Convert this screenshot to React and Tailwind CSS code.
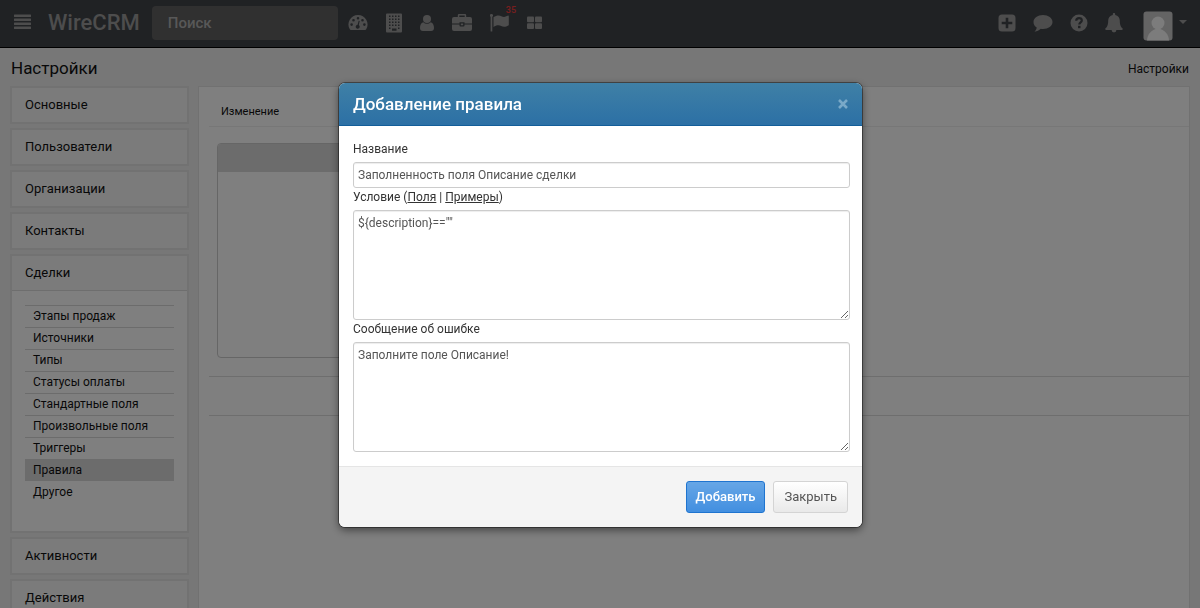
import { useState } from 'react';

const topMenu = [
  { label: 'Дашборд', icon: DashboardIcon },
  { label: 'Организации', icon: BuildingIcon },
  { label: 'Контакты', icon: UserIcon },
  { label: 'Сделки', icon: BriefcaseIcon },
  { label: 'Активности', icon: FlagIcon, badge: 35 },
  { label: 'Ещё', icon: GridIcon },
];

const userMenu = [
  { label: 'Создать', icon: PlusIcon },
  { label: 'Сообщения', icon: CommentIcon },
  { label: 'Помощь', icon: HelpIcon },
  { label: 'Уведомления', icon: BellIcon },
];

const sections = [
  { title: 'Основные' },
  { title: 'Пользователи' },
  { title: 'Организации' },
  { title: 'Контакты' },
  {
    title: 'Сделки',
    items: [
      'Этапы продаж',
      'Источники',
      'Типы',
      'Статусы оплаты',
      'Стандартные поля',
      'Произвольные поля',
      'Триггеры',
      'Правила',
      'Другое',
    ],
  },
  { title: 'Активности' },
  { title: 'Действия' },
];

function DashboardIcon() {
  return (
    <svg width="20" height="18" viewBox="0 0 20 18" fill="currentColor">
      <path
        fillRule="evenodd"
        d="M10 1a9.500 9.500 0 0 0-8.200 14.300c.2.400.600.700 1.100.700h14.200c.5 0 .9-.3 1.100-.7A9.500 9.500 0 0 0 10 1zM10 3a1.300 1.300 0 1 1 0 2.600A1.300 1.300 0 0 1 10 3zM5.500 4.900a1.300 1.300 0 1 1 0 2.600 1.300 1.300 0 0 1 0-2.600zM14.500 4.900a1.300 1.300 0 1 1 0 2.600 1.300 1.300 0 0 1 0-2.600zM3.600 9.300a1.300 1.300 0 1 1 0 2.600 1.300 1.300 0 0 1 0-2.600zM16.400 9.300a1.300 1.300 0 1 1 0 2.600 1.300 1.300 0 0 1 0-2.600zM10.700 6.800l1 .3-.9 4a2 2 0 1 1-1.200-.3z"
      />
    </svg>
  );
}

function BuildingIcon() {
  return (
    <svg width="16" height="20" viewBox="0 0 16 20" fill="currentColor">
      <path
        fillRule="evenodd"
        d="M1 0.500h14q1 0 1 1v17q0 1-1 1H1q-1 0-1-1v-17q0-1 1-1zM3 2.500v1.500h1.500v-1.500zM6 2.500v1.500h1.500v-1.500zM9 2.500v1.500h1.500v-1.500zM12 2.500v1.500h1.500v-1.500zM3 5.500v1.500h1.500v-1.500zM6 5.500v1.500h1.500v-1.500zM9 5.500v1.500h1.500v-1.500zM12 5.500v1.500h1.500v-1.500zM3 8.500v1.500h1.500v-1.500zM6 8.500v1.500h1.500v-1.500zM9 8.500v1.500h1.500v-1.500zM12 8.500v1.500h1.500v-1.500zM3 11.500v1.500h1.500v-1.500zM6 11.500v1.500h1.500v-1.500zM9 11.500v1.500h1.500v-1.500zM12 11.500v1.500h1.500v-1.500zM3 14.500v1.500h1.500v-1.500zM12 14.500v1.500h1.500v-1.500zM6 15.500v2.200h4.500v-2.200z"
      />
    </svg>
  );
}

function UserIcon() {
  return (
    <svg width="14" height="18" viewBox="0 0 14 18" fill="currentColor">
      <circle cx="7" cy="5" r="4" />
      <path d="M3.300 8.200C.8 8.800 0 11.500 0 14c0 1.800 1.100 3 2.800 3h8.400c1.700 0 2.800-1.200 2.800-3 0-2.500-.8-5.200-3.300-5.800A5.300 5.300 0 0 1 7 9.700a5.300 5.300 0 0 1-3.700-1.500z" />
    </svg>
  );
}

function BriefcaseIcon() {
  return (
    <svg width="20" height="18" viewBox="0 0 20 18" fill="currentColor">
      <path
        fillRule="evenodd"
        d="M7 0h6q1.200 0 1.200 1.200V3H18q2 0 2 2v4.500h-7.500V8.300h-5v1.200H0V5q0-2 2-2h3.800V1.200Q5.800 0 7 0zM7.300 1.500V3h5.400V1.500zM0 10.500h7.500v1q0 1 1 1h3q1 0 1-1v-1H20V15q0 2-2 2H2q-2 0-2-2zM8.800 9.500h2.400v1.800H8.800z"
      />
    </svg>
  );
}

function FlagIcon() {
  return (
    <svg width="19" height="18" viewBox="0 0 19 18" fill="currentColor">
      <path d="M1.500 0a1.500 1.500 0 0 1 .8 2.800V17q0 .5-.5.500h-.7q-.5 0-.5-.5V2.800A1.500 1.500 0 0 1 1.500 0zM3.500 3.200C5.300 2.200 6.800 1.500 8.500 1.500c2.300 0 3.600 1.400 5.500 1.400 1.500 0 2.900-.8 4-1.300q.8-.2.800.6v8.500q0 .5-.5.800c-1.300.7-2.700 1.300-4.200 1.300-2.300 0-3.500-1.500-5.800-1.500-1.700 0-3.200.7-4.800 1.600z" />
    </svg>
  );
}

function GridIcon() {
  return (
    <svg width="16" height="14" viewBox="0 0 16 14" fill="currentColor">
      <rect x="0" y="0.500" width="7" height="5.700" rx="1" />
      <rect x="8" y="0.500" width="7" height="5.700" rx="1" />
      <rect x="0" y="7.300" width="7" height="5.700" rx="1" />
      <rect x="8" y="7.300" width="7" height="5.700" rx="1" />
    </svg>
  );
}

function PlusIcon() {
  return (
    <svg width="18" height="18" viewBox="0 0 18 18" fill="currentColor">
      <path
        fillRule="evenodd"
        d="M4 .5h10Q17.500.500 17.500 4v10q0 3.500-3.500 3.500H4Q.5 17.500.500 14V4Q.5.500 4 .5zM7.700 3.700v4h-4v2.600h4v4h2.600v-4h4V7.700h-4v-4z"
      />
    </svg>
  );
}

function CommentIcon() {
  return (
    <svg width="20" height="18" viewBox="0 0 20 18" fill="currentColor">
      <path d="M10 1c5.300 0 9.500 3.100 9.500 7s-4.200 7-9.500 7c-.8 0-1.500-.1-2.200-.2C6.200 16.300 4 17.500 1.500 17.700c1.200-1.200 2-2.500 2.200-4.100C1.700 12.300.500 10.300.500 8 .5 4.100 4.700 1 10 1z" />
    </svg>
  );
}

function HelpIcon() {
  return (
    <svg width="18" height="18" viewBox="0 0 18 18">
      <circle cx="9" cy="9" r="8.500" fill="currentColor" />
      <path d="M6.200 6.800C6.300 5 7.400 4.200 9 4.200s2.800.9 2.800 2.300c0 1.900-2.500 1.900-2.500 4" fill="none" stroke="#404449" strokeWidth="2.200" />
      <rect x="8" y="11.800" width="2.500" height="2.400" fill="#404449" />
    </svg>
  );
}

function BellIcon() {
  return (
    <svg width="18" height="20" viewBox="0 0 18 20" fill="currentColor">
      <path d="M9 0c.7 0 1.200.5 1.200 1.200v.7c3 .5 4.600 2.900 4.600 5.600 0 4.800 1.200 6.700 3 8.200 0 .8-.6 1.300-1.300 1.300h-5.100a2.400 2.400 0 0 1-4.800 0H1.500C.8 17 .2 16.500.2 15.700c1.800-1.500 3-3.400 3-8.200 0-2.700 1.600-5.100 4.600-5.600v-.7C7.800.500 8.300 0 9 0z" />
    </svg>
  );
}

function Header() {
  return (
    <header className="flex h-12 items-center border-b border-black bg-[#404449] pl-3 pr-[13px] text-[#9a9a9a]">
      <button type="button" aria-label="Меню" className="mr-4 flex w-5 justify-center pb-1">
        <svg width="17" height="15" viewBox="0 0 17 15" fill="currentColor">
          <rect y="0.500" width="17" height="2.500" rx="0.500" />
          <rect y="4.500" width="17" height="2.500" rx="0.500" />
          <rect y="8.500" width="17" height="2.500" rx="0.500" />
          <rect y="12.500" width="17" height="2.500" rx="0.500" />
        </svg>
      </button>
      <a href="#" className="mr-3 pb-0.5 text-[22px] font-medium">WireCRM</a>
      <input
        type="search"
        aria-label="Поиск"
        placeholder="Поиск"
        className="mb-0.5 h-[34px] w-[186px] rounded-sm bg-[#606060] px-4 text-[15px] font-medium placeholder:text-[#b0b0b0]"
      />
      <nav className="ml-2.5 flex items-center gap-[18px] pb-0.5">
        {topMenu.map(({ label, icon: Icon, badge }) => (
          <a key={label} href="#" aria-label={label} className="relative">
            <Icon />
            {badge && (
              <span className="absolute -top-2.5 left-4 text-[9px] leading-3 font-medium text-[#f03c3c]">{badge}</span>
            )}
          </a>
        ))}
      </nav>
      <div className="ml-auto flex items-center gap-[17px] pb-0.5">
        {userMenu.map(({ label, icon: Icon }) => (
          <button key={label} type="button" aria-label={label}>
            <Icon />
          </button>
        ))}
      </div>
      <button type="button" aria-label="Профиль" className="ml-5 flex items-center gap-1.5 pt-1">
        <svg width="30" height="30" viewBox="0 0 30 30">
          <rect x="0.500" y="0.500" width="29" height="29" rx="3" fill="#c8c8c8" />
          <circle cx="15" cy="12" r="6.500" fill="#f8f8f8" />
          <path d="M4 29.500c.3-6 4-11 11-12 7 1 10.700 6 11 12z" fill="#f8f8f8" />
        </svg>
        <svg width="8" height="4" viewBox="0 0 8 4" fill="currentColor" className="mb-2">
          <path d="M0 0h8L4 4z" />
        </svg>
      </button>
    </header>
  );
}

function Sidebar() {
  return (
    <aside className="w-[179px] shrink-0 space-y-1">
      {sections.map(({ title, items }) => (
        <section key={title} className="border-2 border-[#e4e4e4] bg-[#f6f6f6]">
          <h2 className="px-[13px] text-[13px] leading-[34px]">
            <a href="#">{title}</a>
          </h2>
          {items && (
            <ul className="border-t border-[#dcdcdc] bg-white px-[13px] pt-3.5 pb-7 text-xs">
              {items.map((item) => (
                <li
                  key={item}
                  className={`border-t px-2 leading-[21px] ${
                    item === 'Правила'
                      ? 'border-[#d8d8d8] bg-[#d8d8d8]'
                      : item === 'Другое'
                        ? 'border-white'
                        : 'border-[#d8d8d8]'
                  }`}
                >
                  <a href="#">{item}</a>
                </li>
              ))}
            </ul>
          )}
        </section>
      ))}
    </aside>
  );
}

function RuleDialog({ onClose }) {
  const [name, setName] = useState('Заполненность поля Описание сделки');
  const [condition, setCondition] = useState('${description}==""');
  const [message, setMessage] = useState('Заполните поле Описание!');

  const field =
    'block w-full rounded-[3px] border border-[#ccc] bg-white px-1 text-xs leading-5 text-[#555] shadow-[inset_0_1px_1px_rgba(0,0,0,0.075)] outline-none';

  return (
    <div className="fixed inset-0 flex items-start justify-center bg-black/50 pt-[83px]">
      <form
        role="dialog"
        aria-label="Добавление правила"
        className="ml-px w-[523px] overflow-hidden rounded-md bg-white shadow-[0_0_0_1px_rgba(0,0,0,0.4),0_3px_9px_rgba(0,0,0,0.5)]"
        onSubmit={(e) => e.preventDefault()}
      >
        <div className="flex h-[43px] items-center justify-between border-b border-[#135e99] bg-linear-to-b from-[#3f80a6] to-[#2c70a5] px-3.5 pt-0.5">
          <h3 className="text-[17px] font-medium text-white">Добавление правила</h3>
          <button type="button" aria-label="Закрыть окно" onClick={onClose} className="pb-0.5 text-[#79a9c8]">
            <svg width="10" height="10" viewBox="0 0 10 10" stroke="currentColor" strokeWidth="2.600">
              <path d="M1 1l8 8M9 1L1 9" />
            </svg>
          </button>
        </div>

        <div className="py-3.5 pl-3.5 pr-3 text-xs leading-[19px] text-[#333]">
          <label htmlFor="rule-name" className="mb-[3px] block">Название</label>
          <input
            id="rule-name"
            value={name}
            onChange={(e) => setName(e.target.value)}
            className={`${field} h-[26px]`}
          />
          <div className="mb-[3px]">
            <label htmlFor="rule-condition">Условие</label> (
            <a href="#" className="underline">Поля</a> | <a href="#" className="underline">Примеры</a>)
          </div>
          <textarea
            id="rule-condition"
            value={condition}
            onChange={(e) => setCondition(e.target.value)}
            className={`${field} h-[110px] py-0.5`}
          />
          <label htmlFor="rule-message" className="mb-[3px] block">Сообщение об ошибке</label>
          <textarea
            id="rule-message"
            value={message}
            onChange={(e) => setMessage(e.target.value)}
            className={`${field} h-[110px] py-0.5`}
          />
        </div>

        <div className="flex justify-end gap-2 border-t border-[#e5e5e5] bg-[#f4f4f4] p-3.5 text-[13px]">
          <button
            type="submit"
            className="h-8 rounded-[3px] border border-[#1f74cf] bg-linear-to-b from-[#66a6e6] to-[#428fe0] px-[9px] font-medium text-white"
          >
            Добавить
          </button>
          <button
            type="button"
            onClick={onClose}
            className="h-8 rounded-[3px] border border-[#d4d4d4] bg-linear-to-b from-white to-[#e9e9e9] px-2.5 text-[#555]"
          >
            Закрыть
          </button>
        </div>
      </form>
    </div>
  );
}

export default function App() {
  const [open, setOpen] = useState(true);

  return (
    <div className="h-screen overflow-hidden bg-[#eee] font-['Roboto','Liberation_Sans',sans-serif] text-[#111]">
      <Header />
      <div className="flex h-[38px] items-center justify-between px-[11px] pt-[3px]">
        <h1 className="text-[17px]">Настройки</h1>
        <a href="#" className="text-xs">Настройки</a>
      </div>
      <div className="flex items-stretch gap-[9px] px-2.5">
        <Sidebar />
        <main className="flex-1 border border-[#e2e2e2] bg-white pl-2.5">
          <div className="flex h-10 items-center border-b border-[#eee] px-3 pt-3 text-[11px]">Изменение</div>
          <div className="ml-2 mt-4 h-[215px] w-2/5 overflow-hidden rounded-sm border border-[#ccc]">
            <div className="h-7 bg-[#d8d8d8]" />
          </div>
          <div className="mt-[18px] h-10 border-y border-[#ddd]" />
        </main>
      </div>
      {open && <RuleDialog onClose={() => setOpen(false)} />}
    </div>
  );
}
